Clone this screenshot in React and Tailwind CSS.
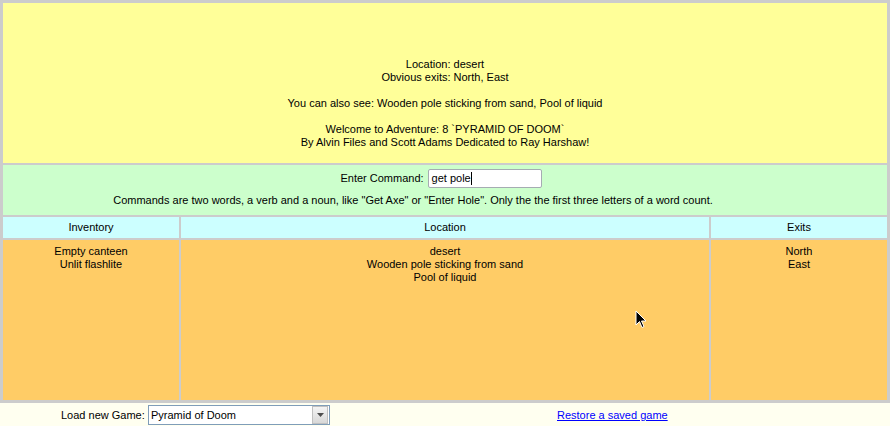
export default function App() {
  const font = { fontFamily: '"Liberation Sans", Arial, sans-serif' };
  return (
    <div className="w-[890px] h-[426px] bg-[#fffff0] text-[11px] leading-[13px] text-black relative overflow-hidden" style={font}>
      <div className="bg-[#cccccc] p-[3px] flex flex-col gap-[2px]">
        <div className="h-[160px] bg-[#ffff99] flex flex-col items-center pt-[55px] text-center">
          <div>Location: desert</div>
          <div>Obvious exits: North, East</div>
          <div className="h-[13px]"></div>
          <div>You can also see: Wooden pole sticking from sand, Pool of liquid</div>
          <div className="h-[13px]"></div>
          <div>Welcome to Adventure: 8 `PYRAMID OF DOOM`</div>
          <div>By Alvin Files and Scott Adams Dedicated to Ray Harshaw!</div>
        </div>
        <div className="h-[50px] bg-[#ccffcc] flex flex-col items-center pt-[4px]">
          <div className="flex items-center h-[19px] pr-[8px]">
            <span className="mr-[4px]">Enter Command:</span>
            <div className="w-[114px] h-[19px] bg-white border border-[#a5acb2] rounded-[2px] flex items-center pl-[3px]">
              <span>get pole</span>
              <span className="w-px h-[13px] bg-black"></span>
            </div>
          </div>
          <div className="mt-[6px] pr-[64px]">Commands are two words, a verb and a noun, like "Get Axe" or "Enter Hole". Only the the first three letters of a word count.</div>
        </div>
        <div className="flex gap-[2px] h-[21px]">
          <div className="w-[176px] bg-[#ccffff] flex items-center justify-center">Inventory</div>
          <div className="w-[528px] bg-[#ccffff] flex items-center justify-center">Location</div>
          <div className="w-[176px] bg-[#ccffff] flex items-center justify-center">Exits</div>
        </div>
        <div className="flex gap-[2px] h-[160px]">
          <div className="w-[176px] bg-[#ffcc66] flex flex-col items-center pt-[5px]">
            <div>Empty canteen</div>
            <div>Unlit flashlite</div>
          </div>
          <div className="w-[528px] bg-[#ffcc66] flex flex-col items-center pt-[5px]">
            <div>desert</div>
            <div>Wooden pole sticking from sand</div>
            <div>Pool of liquid</div>
          </div>
          <div className="w-[176px] bg-[#ffcc66] flex flex-col items-center pt-[5px]">
            <div>North</div>
            <div>East</div>
          </div>
        </div>
      </div>
      <div className="flex items-center h-[23px] pt-[1px]">
        <span className="ml-[61px] w-[82px] whitespace-nowrap">Load new Game:</span>
        <div className="ml-[5px] w-[182px] h-[20px] bg-white border border-[#7f9db9] flex items-center">
          <span className="flex-1 pl-[2px]">Pyramid of Doom</span>
          <div className="w-[16px] h-[18px] mr-px bg-gradient-to-b from-[#f4f4f4] to-[#d8d8d8] border border-[#c0c0c0] flex items-center justify-center">
            <svg width="7" height="4" viewBox="0 0 7 4"><path d="M0 0 H7 L3.5 4 Z" fill="#4d4d4d" /></svg>
          </div>
        </div>
        <a className="ml-[227px] text-[#0000ff] underline whitespace-nowrap">Restore a saved game</a>
      </div>
      <svg className="absolute left-[635px] top-[310px]" width="13" height="20" viewBox="0 0 13 20">
        <path d="M1 1 L1 15 L4.5 11.5 L7 17.5 L9 16.5 L6.5 11 L11 11 Z" fill="black" stroke="white" strokeWidth="1" />
      </svg>
    </div>
  );
}
